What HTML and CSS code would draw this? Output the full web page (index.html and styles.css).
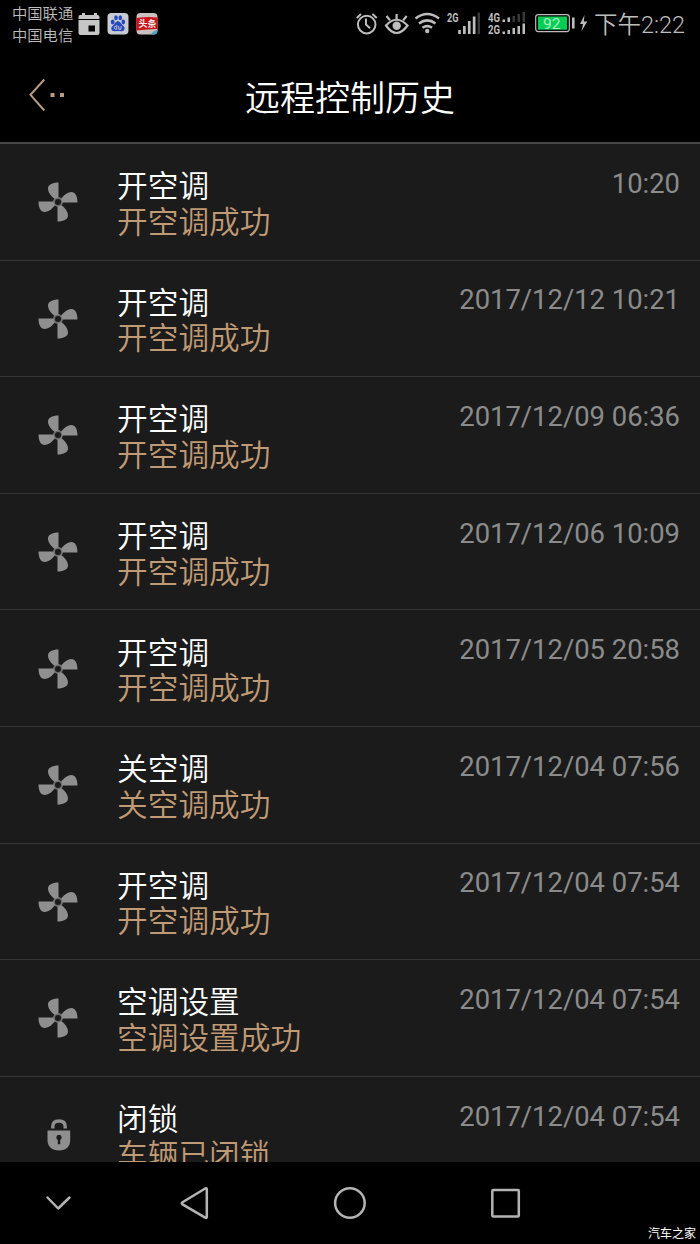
FILE: index.html
```
<!DOCTYPE html>
<html lang="zh-CN">
<head>
<meta charset="utf-8">
<title>远程控制历史</title>
<link rel="stylesheet" href="styles.css">
</head>
<body>
<svg class="defs" aria-hidden="true">
  <symbol id="fan" viewBox="-20 -20 40 40">
    <g fill="#8f8f8f">
      <path id="blade" d="M.5-19.5V-4.2A4.2 4.2 0 0 0-3-3C-6-5-10-9-10-13.5C-10-17-6-19.5 .5-19.5Z"/>
      <use href="#blade" transform="rotate(90)"/>
      <use href="#blade" transform="rotate(180)"/>
      <use href="#blade" transform="rotate(270)"/>
      <path fill-rule="evenodd" d="M0-5A5 5 0 1 1 0 5A5 5 0 1 1 0-5ZM0-3A3 3 0 1 0 0 3A3 3 0 1 0 0-3Z" opacity=".7"/>
    </g>
  </symbol>
  <symbol id="lock" viewBox="0 0 24 32">
    <path d="M5.800 9.500V7.500Q5.800 2 12 2T18.200 7.500V9.500" fill="none" stroke="#8f8f8f" stroke-width="3.400"/>
    <path d="M.5 11.500H23.200V21C23.200 27.500 19 31.500 12 31.500S.5 27.500 .5 21Z" fill="#8f8f8f"/>
    <path d="M12 15.800a2.700 2.700 0 0 1 1.200 5.100V25.200H10.800V20.900A2.700 2.700 0 0 1 12 15.800Z" fill="#1b1b1b"/>
  </symbol>
</svg>
<div class="phone">
  <div class="status">
    <div class="carriers"><span>中国联通</span><span>中国电信</span></div>
    <svg class="notices" width="82" height="24" viewBox="0 0 82 24">
      <path d="M2 3H4V1H7V3H16V1H19V3H19.5Q21.5 3 21.5 5V7H.5V5Q.5 3 2 3ZM.5 8H21.5V21Q21.5 23 19.5 23H2.5Q.5 23 .5 21Z" fill="#c6c6c6"/>
      <rect x="10.5" y="13.5" width="6.5" height="6" fill="#000"/>
      <rect x="29.5" y="1" width="21" height="21.5" rx="4" fill="#c8cbd2"/>
      <g fill="#2748bd"><ellipse cx="34.7" cy="10" rx="1.9" ry="2.5"/><ellipse cx="38" cy="5.8" rx="1.8" ry="2.5"/><ellipse cx="42.3" cy="5.8" rx="1.8" ry="2.5"/><ellipse cx="45.3" cy="10" rx="1.8" ry="2.4"/><path d="M40 9.2C42.5 9.2 43 12.2 45 13.6C48 16 46.5 19.7 43 19.3Q40 18.7 37 19.3C33.2 19.6 32 16 35 13.6C37 12 37.5 9.2 40 9.2Z"/></g>
      <path d="M38.8 13V17.3H37.8A1.2 1.2 0 0 1 37.8 14.2H38.8M40.8 14V17.3H43V14" fill="none" stroke="#c8cbd2" stroke-width=".9"/>
      <rect x="58.5" y="1" width="21" height="21.5" rx="4" fill="#c9c2c0"/>
      <path d="M58.5 6Q69 4.500 79.500 5.500V17Q69 17 58.500 18.500Z" fill="#cf1219"/>
      <path d="M73 22.500Q74 19 79.500 18Q79.500 22.500 76 22.500Z" fill="#4ba9bd"/>
      <text class="headline" x="60.500" y="15">头条</text>
    </svg>
    <svg class="system" width="236" height="30" viewBox="352 8 236 30" fill="none" stroke="#bdbdbd">
      <g stroke-width="2"><circle cx="366.700" cy="24.600" r="8.800"/><path d="M366 18.500V24.500L370 28.300M356.800 18L361 14M372.400 14L376.700 18"/></g>
      <g stroke-width="2.200"><path d="M386 25.500Q396.500 14 407.500 25.500Q396.500 40.500 386 25.500ZM396.600 14V19M386.500 16L390 20.300M406.700 16L403.200 20.300"/><circle cx="396.700" cy="25.700" r="4.200" fill="#bdbdbd" stroke="none"/></g>
      <g stroke-width="2.600"><path d="M415.500 18.500Q427.200 9.500 439 18.500M419 23.500Q427.200 17.200 435.500 23.500M422.500 27.800Q427.200 24.500 432 27.800"/><circle cx="427.200" cy="31" r="2.200" fill="#bdbdbd" stroke="none"/></g>
      <g stroke="none" fill="#bdbdbd"><text class="net" x="447" y="22" textLength="11.500" lengthAdjust="spacingAndGlyphs">2G</text><path d="M458.200 30H460.800V34H458.200ZM463 26H465.700V34H463ZM467.900 21H470.600V34H467.900ZM472.800 16.500H475.500V34H472.800Z"/><path d="M477.600 12.500H480V34H477.600Z" fill="#393939"/>
      <text class="net" x="488" y="21.500" textLength="12" lengthAdjust="spacingAndGlyphs">4G</text><text class="net" x="488" y="34" textLength="12" lengthAdjust="spacingAndGlyphs">2G</text>
      <path d="M502.500 19.500H505V22H502.500ZM507.500 17.500H510V22H507.500ZM502.500 31.500H505V34H502.500ZM507.500 30H510V34H507.500ZM512.500 28H515V34H512.500ZM517.500 26H520V34H517.500ZM522.500 23.500H525V34H522.500Z"/><path d="M512.500 16H515V22H512.500ZM517.500 14H520V22H517.500ZM522.500 12H525V22H522.500Z" fill="#393939"/></g>
      <rect x="535.700" y="14.600" width="33.600" height="17" rx="2.500" stroke-width="1.200"/>
      <rect x="538" y="16.500" width="29" height="13.200" fill="#05ce55" stroke="none"/>
      <text class="charge" x="543" y="29" fill="#a9efc4" stroke="none">92</text>
      <path d="M572 17.500H574.600V28.500H572ZM584.500 15L580 24H583L581.500 31L587.300 21.500H583.800Z" fill="#bdbdbd" stroke="none"/>
    </svg>
    <time class="clock">下午2:22</time>
  </div>
  <header class="header">
    <svg class="back" width="42" height="40" viewBox="0 0 42 40"><path d="M17.300 4.500L3.500 19.800L17.300 35.500" fill="none" stroke="#b89b80" stroke-width="2"/><path d="M23.500 18H27.500V22H23.500ZM33 18H37V22H33Z" fill="#b89b80"/></svg>
    <h1 class="title">远程控制历史</h1>
  </header>
  <main class="list">
    <article class="row"><svg class="icon"><use href="#fan"/></svg><div class="texts"><h2>开空调</h2><p>开空调成功</p></div><time>10:20</time></article>
    <article class="row"><svg class="icon"><use href="#fan"/></svg><div class="texts"><h2>开空调</h2><p>开空调成功</p></div><time>2017/12/12 10:21</time></article>
    <article class="row"><svg class="icon"><use href="#fan"/></svg><div class="texts"><h2>开空调</h2><p>开空调成功</p></div><time>2017/12/09 06:36</time></article>
    <article class="row"><svg class="icon"><use href="#fan"/></svg><div class="texts"><h2>开空调</h2><p>开空调成功</p></div><time>2017/12/06 10:09</time></article>
    <article class="row"><svg class="icon"><use href="#fan"/></svg><div class="texts"><h2>开空调</h2><p>开空调成功</p></div><time>2017/12/05 20:58</time></article>
    <article class="row"><svg class="icon"><use href="#fan"/></svg><div class="texts"><h2>关空调</h2><p>关空调成功</p></div><time>2017/12/04 07:56</time></article>
    <article class="row"><svg class="icon"><use href="#fan"/></svg><div class="texts"><h2>开空调</h2><p>开空调成功</p></div><time>2017/12/04 07:54</time></article>
    <article class="row"><svg class="icon"><use href="#fan"/></svg><div class="texts"><h2>空调设置</h2><p>空调设置成功</p></div><time>2017/12/04 07:54</time></article>
    <article class="row"><svg class="icon lock"><use href="#lock"/></svg><div class="texts"><h2>闭锁</h2><p>车辆已闭锁</p></div><time>2017/12/04 07:54</time></article>
  </main>
  <nav class="nav">
    <svg width="540" height="40" viewBox="0 1183 540 40" fill="none" stroke="#b4b4b4" stroke-width="2.500" stroke-linejoin="round" stroke-linecap="round">
      <path d="M47.500 1197.500L58.200 1208.500L69.500 1197.500"/>
      <path d="M206.800 1189.500V1217Q206.800 1218.500 205.200 1217.600L182.500 1204.300Q181 1203.200 182.500 1202.200L205.200 1188.500Q206.800 1187.800 206.800 1189.500Z"/>
      <circle cx="349.900" cy="1203" r="14.800"/>
      <rect x="492.300" y="1190" width="26.500" height="26.500" rx="1"/>
    </svg>
    <span class="mark">汽车之家</span>
  </nav>
</div>
</body>
</html>
```
FILE: styles.css
```
body {
  margin: 0;
  background: #000;
  font-family: Roboto, "Noto Sans CJK SC", sans-serif;
}
h1, h2, p { margin: 0; font-weight: 350; }
.defs { position: absolute; width: 0; height: 0; }
.phone {
  width: 700px;
  height: 1244px;
  display: flex;
  flex-direction: column;
  overflow: hidden;
}
.status {
  height: 48px;
  display: flex;
  box-sizing: border-box;
  padding-left: 12px;
  color: #bdbdbd;
}
.carriers {
  display: flex;
  flex-direction: column;
  width: 66px;
  padding-top: 2px;
  font: 350 15.3px/21.5px "Noto Sans CJK SC", sans-serif;
  white-space: nowrap;
}
.notices { margin-top: 12px; flex: none; }
.system { margin: 8px 0 0 192px; flex: none; }
.headline { font: bold 9px "Noto Sans CJK SC", sans-serif; fill: #eee; }
.net { font: bold 12.5px Roboto, sans-serif; }
.charge { font: 400 15.5px Roboto, sans-serif; }
.clock {
  margin: 8px 0 0 6px;
  font-size: 23.5px;
  line-height: 34px;
  font-weight: 350;
  white-space: nowrap;
}
.header {
  height: 96px;
  box-sizing: border-box;
  display: grid;
  grid-template-columns: 120px 1fr 120px;
  border-bottom: 2px solid #484848;
}
.back { margin: 27px 0 0 27px; }
.title {
  padding-top: 22px;
  color: #fff;
  font: 350 35px/52px "Noto Sans CJK SC", sans-serif;
  text-align: center;
}
.list {
  height: 1018px;
  overflow: hidden;
  background: #1b1b1b;
}
.row {
  height: 116.6px;
  box-sizing: border-box;
  display: grid;
  grid-template-columns: 117px 1fr auto;
  padding-right: 20px;
  border-bottom: 1px solid #353535;
}
.icon { width: 40px; height: 40px; margin: 38.3px 0 0 38.3px; }
.icon.lock { width: 24px; height: 32px; margin: 42.5px 0 0 46.5px; }
.texts {
  padding-top: 22.3px;
  font-family: "Noto Sans CJK SC", sans-serif;
}
.texts h2, .texts p { font-size: 30.7px; line-height: 35.5px; }
.texts h2 { color: #fff; }
.texts p { color: #c09a74; }
.row time {
  padding-top: 23.8px;
  color: #8b8b8b;
  font-size: 27.4px;
  line-height: 32px;
}
.nav {
  height: 82px;
  display: flex;
  justify-content: space-between;
}
.nav svg { margin-top: 21px; }
.mark {
  padding: 62px 4px 0 0;
  color: #fff;
  font: 400 12px/18px "Noto Sans CJK SC", sans-serif;
}
```
